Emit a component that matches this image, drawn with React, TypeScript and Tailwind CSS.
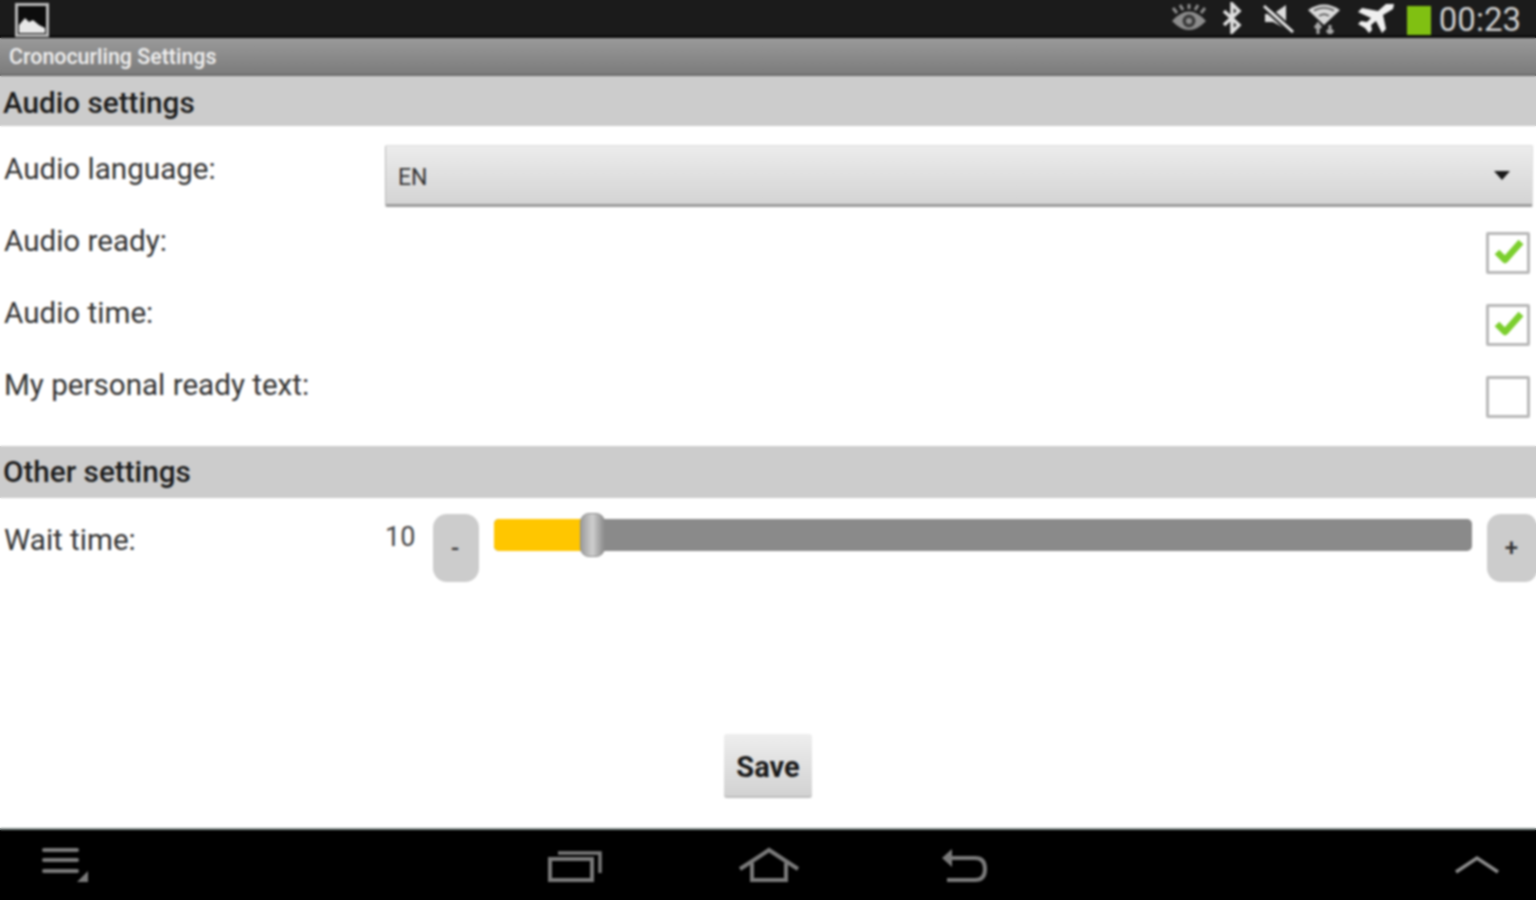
import React from "react";

const Check = ({ on }: { on: boolean }) => (
  <div className="relative w-[44px] h-[42px] border-[3px] border-[#b8b8b8] rounded-[2px] bg-white">
    {on && (
      <svg viewBox="0 0 44 42" className="absolute left-[-3px] top-[-3px] w-[44px] h-[42px]">
        <path d="M11 20 L19 28 L35 10" fill="none" stroke="#7ccf2e" strokeWidth="6.5" strokeLinejoin="round" />
      </svg>
    )}
  </div>
);

const SectionHeader = ({ children, h }: { children: React.ReactNode; h: string }) => (
  <div className={`bg-[#cccccc] flex items-center pl-[3px] text-[29.7px] font-medium text-[#1c1c1c] ${h}`}>{children}</div>
);

const Label = ({ children }: { children: React.ReactNode }) => (
  <div className="text-[29.6px] leading-[36px] text-[#333333]">{children}</div>
);

const CheckRow = ({ label, on }: { label: string; on: boolean }) => (
  <div className="h-[72px] flex justify-between pl-[4px] pr-[6px]">
    <div className="pt-[6px]"><Label>{label}</Label></div>
    <div className="pt-[15px]"><Check on={on} /></div>
  </div>
);

const StatusIcons = () => (
  <div className="flex items-center h-full">
    <svg viewBox="0 0 36 30" className="w-[36px] h-[30px]" fill="none">
      <path d="M1 18 Q18 -1 35 18 Q18 36 1 18Z" fill="#8c8c8c" />
      <circle cx="18" cy="18" r="6.5" fill="#3a3a3a" />
      <circle cx="18" cy="18" r="3" fill="#8c8c8c" />
      <path d="M6 10 L2 5 M12 7 L9 2 M18 6 V1 M24 7 L27 2 M30 10 L34 5" stroke="#8c8c8c" strokeWidth="3" />
    </svg>
    <svg viewBox="0 0 22 32" className="w-[22px] h-[32px] ml-[14px]" fill="none">
      <path d="M3 9 L18 23 L11 30 V2 L18 9 L3 23" stroke="#e0e0e0" strokeWidth="3.5" />
    </svg>
    <svg viewBox="0 0 34 30" className="w-[34px] h-[30px] ml-[19px]" fill="none">
      <path d="M3 11 H11 L24 2 V26 L11 19 H3Z" fill="#dcdcdc" />
      <path d="M2 3 L31 29" stroke="#1a1a1a" strokeWidth="7" />
      <path d="M2 3 L31 29" stroke="#e4e4e4" strokeWidth="3" />
    </svg>
    <svg viewBox="0 0 34 32" className="w-[34px] h-[32px] ml-[11px]" fill="none">
      <path d="M1 8 Q17 -3 33 8 L17 23Z" fill="#d8d8d8" />
      <path d="M7 8.5 Q17 3 27 8.5 M12 14 Q17 10.5 22 14" stroke="#4a4a4a" strokeWidth="1.5" />
      <path d="M11 32 V23 M8 26 L11 22 L14 26 M23 23 V32 M20 28 L23 32 L26 28" stroke="#a8a8a8" strokeWidth="3" />
    </svg>
    <svg viewBox="0 0 36 30" className="w-[36px] h-[30px] ml-[17px]">
      <path d="M36 1 L28 1 L20 8 L4 5 L0 9 L13 15 L9 19 L3 18 L0 21 L7 25 L11 30 L14 27 L13 22 L18 18 L24 30 L28 26 L25 12 L35 6Z" fill="#f0f0f0" />
    </svg>
    <div className="w-[24px] h-[29px] ml-[13px] mt-[6px] bg-[#80c012]" />
    <div className="ml-[8px] mr-[15px] mt-[4px] text-[33px] leading-none text-[#cfcfcf]">00:23</div>
  </div>
);

export default function App() {
  return (
    <div className="relative w-[1536px] h-[900px] flex flex-col bg-white overflow-hidden font-['Roboto',sans-serif]">
      <div className="h-[38px] shrink-0 bg-[#1b1b1b] border-b-[3px] border-[#0e0e0e] flex items-center justify-between">
        <div className="pl-[15px] h-full flex items-start pt-[3px]">
          <svg viewBox="0 0 34 34" className="w-[34px] h-[34px]" fill="none">
            <rect x="1.5" y="1.5" width="31" height="31" stroke="#b8b8b8" strokeWidth="3" fill="#0c0c0c" />
            <path d="M4 30 V22 L10 15 L14 19 L18 17 L24 22 L30 25 V30Z" fill="#e8e8e8" />
          </svg>
        </div>
        <StatusIcons />
      </div>
      <div className="h-[38px] shrink-0 bg-gradient-to-b from-[#9a9a9a] to-[#7c7c7c] border-b-[2px] border-[#6b6b6b] flex items-center pl-[9px] pt-[2px] text-[21.4px] font-medium text-[#f0f0f0]">
        Cronocurling Settings
      </div>
      <div className="flex-1 flex flex-col min-h-0">
        <SectionHeader h="h-[50px] shrink-0 pt-[4px]">Audio settings</SectionHeader>
        <div className="h-[91px] shrink-0 flex">
          <div className="w-[385px] shrink-0 pl-[4px] pt-[25px]"><Label>Audio language:</Label></div>
          <div className="flex-1 pt-[19px] pr-[3px]">
            <div className="h-[62px] rounded-[2px] bg-gradient-to-b from-[#ececec] to-[#d4d4d4] border border-[#dcdcdc] border-b-[3px] border-b-[#9c9c9c] border-l-[#b8b8b8] flex items-center justify-between pl-[12px] pr-[22px]">
              <span className="text-[23px] pt-[6px] text-[#333333]">EN</span>
              <svg viewBox="0 0 16 9" className="w-[16px] h-[9px]"><path d="M0 0 H16 L8 9Z" fill="#1a1a1a" /></svg>
            </div>
          </div>
        </div>
        <CheckRow label="Audio ready:" on />
        <CheckRow label="Audio time:" on />
        <CheckRow label="My personal ready text:" on={false} />
        <div className="h-[13px] shrink-0" />
        <SectionHeader h="h-[52px] shrink-0">Other settings</SectionHeader>
        <div className="shrink-0 flex h-[84px]">
          <div className="w-[385px] shrink-0 pl-[4px] pt-[24px]"><Label>Wait time:</Label></div>
          <div className="w-[48px] shrink-0 pt-[23px] text-[27px] leading-[32px] text-[#444444]">10</div>
          <div className="pt-[16px]">
            <div className="w-[46px] h-[68px] rounded-[14px] bg-[#cccccc] flex items-center justify-center pr-[2px] text-[24px] font-medium text-[#333333]">-</div>
          </div>
          <div className="relative w-[978px] h-[32px] mt-[21px] ml-[15px] rounded-[5px] bg-[#8a8a8a] overflow-visible">
            <div className="h-full w-[90px] rounded-l-[5px] bg-[#ffc600]" />
            <div className="absolute left-[86px] top-[-6px] w-[25px] h-[44px] rounded-[9px] bg-gradient-to-r from-[#9c9c9c] via-[#cfcfcf] to-[#8c8c8c] border border-[#8e8e8e]" />
          </div>
          <div className="pt-[16px] ml-[15px]">
            <div className="w-[49px] h-[68px] rounded-l-[14px] rounded-r-[10px] bg-[#cccccc] flex items-center justify-center text-[24px] font-medium text-[#333333]">+</div>
          </div>
        </div>
        <div className="mt-auto mb-[30px] self-center w-[88px] h-[64px] rounded-[3px] bg-gradient-to-b from-[#eeeeee] to-[#d2d2d2] border-b-[2px] border-[#bdbdbd] flex items-center justify-center pt-[6px] text-[29px] font-bold text-[#1a1a1a]">
          Save
        </div>
      </div>
      <div className="h-[72px] shrink-0 bg-black border-t-[2px] border-[#7f8a88] flex items-center pl-[41px] pr-[36px]">
        <svg viewBox="0 0 50 40" className="w-[50px] h-[40px]" fill="none">
          <path d="M3 5 H36 M3 15 H36 M3 26 H36" stroke="#7a7a7a" strokeWidth="4" strokeLinecap="round" />
          <path d="M47 26 V37 H36Z" fill="#7a7a7a" />
        </svg>
        <svg viewBox="0 0 56 40" className="w-[56px] h-[40px] ml-[456px]" fill="none">
          <path d="M11 8 H53 V28" stroke="#7a7a7a" strokeWidth="3.5" />
          <rect x="3" y="14" width="42" height="21" stroke="#7a7a7a" strokeWidth="4" />
        </svg>
        <svg viewBox="0 0 62 40" className="w-[62px] h-[40px] ml-[135px]" fill="none">
          <path d="M2 24 L31 5 L60 24" stroke="#7a7a7a" strokeWidth="4" />
          <path d="M14 18 V35 H48 V18" stroke="#7a7a7a" strokeWidth="4" />
        </svg>
        <svg viewBox="0 0 50 40" className="w-[50px] h-[40px] ml-[139px]" fill="none">
          <path d="M3 13 L13 4 V22Z" fill="#7a7a7a" />
          <path d="M10 13 H36 Q46 13 46 24 Q46 35 36 35 H8" stroke="#7a7a7a" strokeWidth="4" />
        </svg>
        <svg viewBox="0 0 46 20" className="w-[46px] h-[20px] ml-auto" fill="none">
          <path d="M2 17 L23 3 L44 17" stroke="#8c8c8c" strokeWidth="3.5" />
        </svg>
      </div>
      <div className="absolute inset-0 pointer-events-none backdrop-blur-[0.8px]" />
    </div>
  );
}
